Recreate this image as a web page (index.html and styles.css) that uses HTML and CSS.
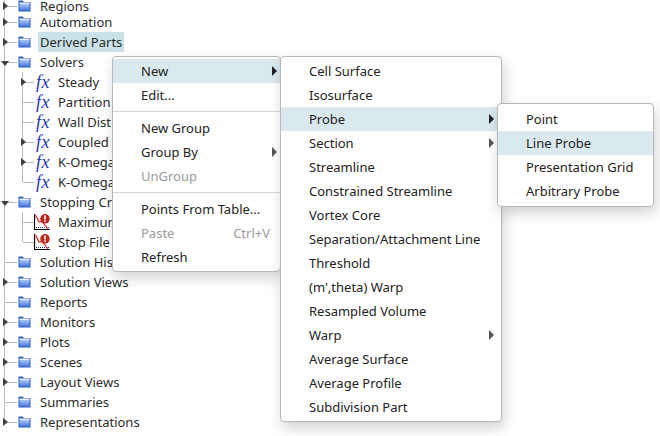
FILE: index.html
```html
<!DOCTYPE html>
<html lang="en">
<head>
    <meta charset="UTF-8">
    <title>Simulation tree context menu</title>
    <link rel="stylesheet" href="styles.css">
</head>
<body>
    <svg class="defs" width="0" height="0">
        <defs>
            <linearGradient id="folderFill" x1="0" y1="0" x2="0" y2="1">
                <stop offset="0" stop-color="#a9c5f8"/>
                <stop offset="1" stop-color="#4a78dc"/>
            </linearGradient>
            <symbol id="folder" viewBox="0 0 13 12">
                <path d="M0.5 11V1.5Q0.5 0.5 1.5 0.5H4.5L6 2H11.5Q12.5 2 12.5 3V11Q12.5 11.5 12 11.5H1Q0.5 11.5 0.5 11Z" fill="#2f5cc0"/>
                <rect x="1.5" y="2.5" width="10" height="1.5" fill="#eef4fe"/>
                <rect x="1.5" y="4" width="10" height="6.5" fill="url(#folderFill)"/>
            </symbol>
            <symbol id="alert" viewBox="0 0 16 16">
                <path d="M0.5 0V15.5H16" fill="none" stroke="#000" stroke-width="1.2"/>
                <path d="M2 13.5H16" fill="none" stroke="#2030c0" stroke-width="1" stroke-dasharray="1 1"/>
                <path d="M1.5 1L5 8L8 7.5L14 15" fill="none" stroke="#e02020" stroke-width="1.2"/>
                <circle cx="11" cy="4.8" r="4.8" fill="#c0281c"/>
                <rect x="10.2" y="1.5" width="1.6" height="4" fill="#fff"/>
                <rect x="10.2" y="6.3" width="1.6" height="1.6" fill="#fff"/>
            </symbol>
        </defs>
    </svg>

    <ul class="tree">
        <li class="node has-kids"><span class="twist"></span><svg class="folder"><use href="#folder"/></svg><span class="label">Regions</span></li>
        <li class="node has-kids"><span class="twist"></span><svg class="folder"><use href="#folder"/></svg><span class="label">Automation</span></li>
        <li class="node has-kids"><span class="twist"></span><svg class="folder"><use href="#folder"/></svg><span class="label selected">Derived Parts</span></li>
        <li class="node open"><span class="twist"></span><svg class="folder"><use href="#folder"/></svg><span class="label">Solvers</span></li>
        <li>
            <ul class="subtree">
                <li class="node has-kids"><span class="twist"></span><span class="fx">fx</span><span class="label">Steady</span></li>
                <li class="node"><span class="twist"></span><span class="fx">fx</span><span class="label">Partition</span></li>
                <li class="node"><span class="twist"></span><span class="fx">fx</span><span class="label">Wall Dist</span></li>
                <li class="node has-kids"><span class="twist"></span><span class="fx">fx</span><span class="label">Coupled</span></li>
                <li class="node has-kids"><span class="twist"></span><span class="fx">fx</span><span class="label">K-Omega</span></li>
                <li class="node"><span class="twist"></span><span class="fx">fx</span><span class="label">K-Omega</span></li>
            </ul>
        </li>
        <li class="node open"><span class="twist"></span><svg class="folder"><use href="#folder"/></svg><span class="label">Stopping Cr</span></li>
        <li>
            <ul class="subtree">
                <li class="node"><span class="twist"></span><svg class="alert"><use href="#alert"/></svg><span class="label">Maximum</span></li>
                <li class="node"><span class="twist"></span><svg class="alert"><use href="#alert"/></svg><span class="label">Stop File</span></li>
            </ul>
        </li>
        <li class="node"><span class="twist"></span><svg class="folder"><use href="#folder"/></svg><span class="label">Solution His</span></li>
        <li class="node has-kids"><span class="twist"></span><svg class="folder"><use href="#folder"/></svg><span class="label">Solution Views</span></li>
        <li class="node"><span class="twist"></span><svg class="folder"><use href="#folder"/></svg><span class="label">Reports</span></li>
        <li class="node has-kids"><span class="twist"></span><svg class="folder"><use href="#folder"/></svg><span class="label">Monitors</span></li>
        <li class="node has-kids"><span class="twist"></span><svg class="folder"><use href="#folder"/></svg><span class="label">Plots</span></li>
        <li class="node has-kids"><span class="twist"></span><svg class="folder"><use href="#folder"/></svg><span class="label">Scenes</span></li>
        <li class="node has-kids"><span class="twist"></span><svg class="folder"><use href="#folder"/></svg><span class="label">Layout Views</span></li>
        <li class="node"><span class="twist"></span><svg class="folder"><use href="#folder"/></svg><span class="label">Summaries</span></li>
        <li class="node has-kids"><span class="twist"></span><svg class="folder"><use href="#folder"/></svg><span class="label">Representations</span></li>
    </ul>

    <div class="menu menu-main">
        <div class="item active sub">New</div>
        <div class="item">Edit...</div>
        <div class="sep"></div>
        <div class="item">New Group</div>
        <div class="item sub muted-arrow">Group By</div>
        <div class="item disabled">UnGroup</div>
        <div class="sep"></div>
        <div class="item">Points From Table...</div>
        <div class="item disabled">Paste<span class="shortcut">Ctrl+V</span></div>
        <div class="item">Refresh</div>
    </div>

    <div class="menu menu-new">
        <div class="item">Cell Surface</div>
        <div class="item">Isosurface</div>
        <div class="item active sub">Probe</div>
        <div class="item sub muted-arrow">Section</div>
        <div class="item">Streamline</div>
        <div class="item">Constrained Streamline</div>
        <div class="item">Vortex Core</div>
        <div class="item">Separation/Attachment Line</div>
        <div class="item">Threshold</div>
        <div class="item">(m',theta) Warp</div>
        <div class="item">Resampled Volume</div>
        <div class="item sub muted-arrow">Warp</div>
        <div class="item">Average Surface</div>
        <div class="item">Average Profile</div>
        <div class="item">Subdivision Part</div>
    </div>

    <div class="menu menu-probe">
        <div class="item">Point</div>
        <div class="item active">Line Probe</div>
        <div class="item">Presentation Grid</div>
        <div class="item">Arbitrary Probe</div>
    </div>
</body>
</html>
```

FILE: styles.css
```css
* {
    margin: 0;
    padding: 0;
    box-sizing: border-box;
}

html, body {
    height: 100%;
    overflow: hidden;
}

body {
    background: white;
    color: #2b2b2b;
    font-family: "Noto Sans", "Open Sans", sans-serif;
    font-size: 13px;
    position: relative;
}

.defs {
    position: absolute;
}

ul {
    list-style: none;
}

/* tree */
.tree {
    background: linear-gradient(#b9b9b9, #b9b9b9) no-repeat 4px 0 / 1px calc(100% - 10px);
}

.subtree {
    background: linear-gradient(#b9b9b9, #b9b9b9) no-repeat 22px 0 / 1px calc(100% - 10px);
}

.node {
    display: flex;
    align-items: center;
    height: 20px;
    padding-left: 4px;
}

/* the first row is scrolled partly out of view */
.tree > .node:first-child {
    height: 12px;
}

.tree > .node:first-child .label {
    line-height: 12px;
}

.subtree .node {
    padding-left: 22px;
}

.twist {
    flex: none;
    position: relative;
    width: 14px;
    height: 20px;
    background: linear-gradient(#b9b9b9, #b9b9b9) no-repeat 1px 10px / 12px 1px;
}

.subtree .twist {
    width: 14px;
    background-size: 11px 1px;
}

.has-kids > .twist::before {
    content: '';
    position: absolute;
    left: -1px;
    top: 6px;
    border-left: 5px solid #404040;
    border-top: 4px solid transparent;
    border-bottom: 4px solid transparent;
}

.open > .twist::before {
    content: '';
    position: absolute;
    left: -3px;
    top: 9px;
    border-top: 5px solid #404040;
    border-left: 4px solid transparent;
    border-right: 4px solid transparent;
}

.folder {
    flex: none;
    width: 13px;
    height: 12px;
    margin-right: 7px;
}

.fx {
    flex: none;
    width: 22px;
    color: #2a35b0;
    font-family: "Liberation Serif", serif;
    font-style: italic;
    font-size: 18px;
    letter-spacing: 0.5px;
    line-height: 20px;
}

.alert {
    flex: none;
    width: 16px;
    height: 16px;
    margin-left: -2px;
    margin-right: 8px;
}

.label {
    padding: 0 2px;
    line-height: 20px;
    white-space: nowrap;
}

.label.selected {
    background: #c9e2e7;
}

.subtree .label {
    padding-left: 0;
}

/* popup menus */
.menu {
    position: absolute;
    padding: 2px 0;
    background: white;
    border: 1px solid #b8b8b8;
    border-radius: 4px;
    box-shadow: 2px 6px 14px rgba(0, 0, 0, 0.18);
    color: #222;
}

.menu-main {
    left: 112px;
    top: 56px;
    width: 169px;
    height: 216px;
}

.menu-new {
    left: 280px;
    top: 56px;
    width: 222px;
    height: 366px;
}

.menu-probe {
    left: 497px;
    top: 103px;
    width: 157px;
    height: 104px;
    padding-top: 3px;
}

.item {
    position: relative;
    height: 24px;
    line-height: 24px;
    padding-left: 28px;
    white-space: nowrap;
}

.item.active {
    background: #d9e9ee;
}

.item.disabled {
    color: #9a9a9a;
}

.item.sub::after {
    content: '';
    position: absolute;
    right: 3px;
    top: 7px;
    border-left: 5px solid #222;
    border-top: 5px solid transparent;
    border-bottom: 5px solid transparent;
}

.item.muted-arrow::after {
    border-left-color: #555;
}

.menu-new .item.sub::after {
    right: 7px;
}

.shortcut {
    position: absolute;
    right: 10px;
    color: #9a9a9a;
}

.sep {
    height: 1px;
    margin: 4px 0;
    background: #d4d4d4;
}
```
